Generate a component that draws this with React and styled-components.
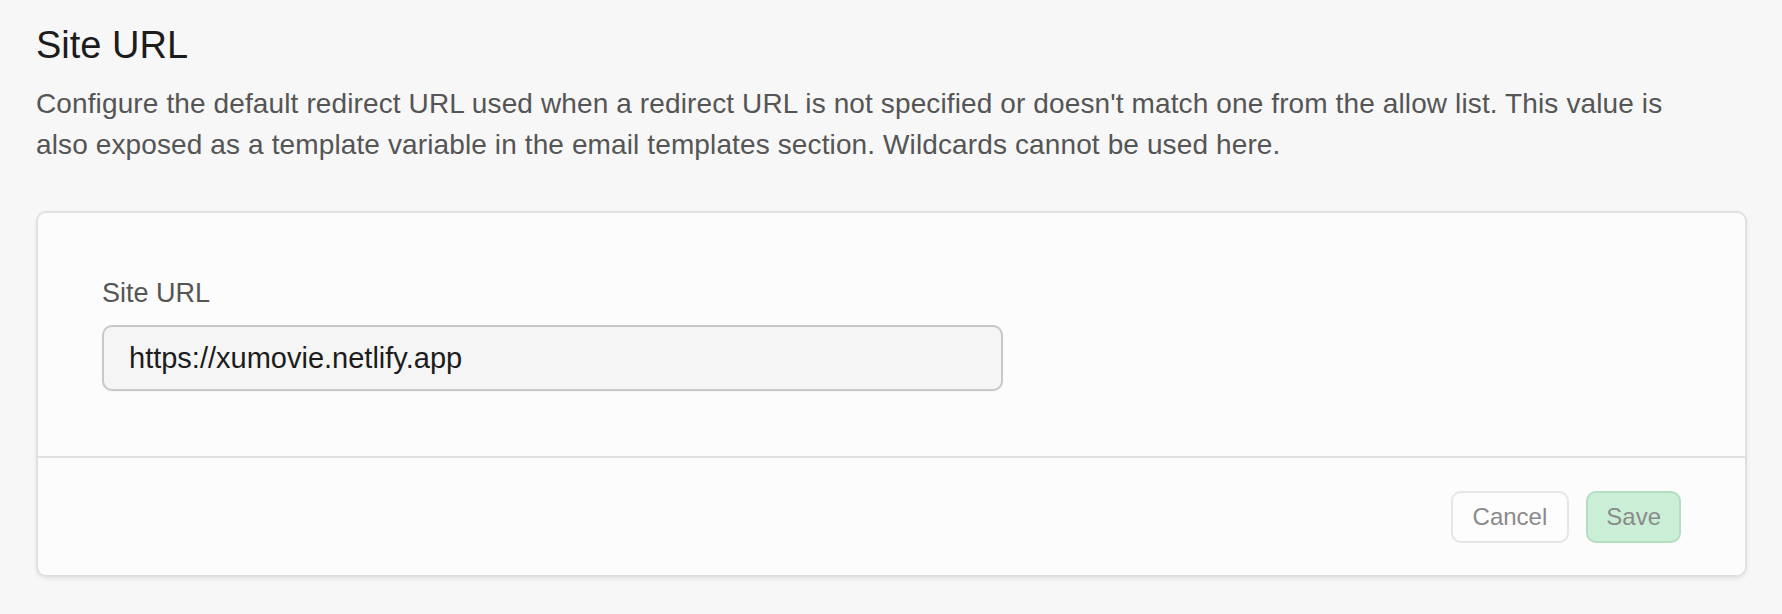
import React from "react";
import styled, { createGlobalStyle } from "styled-components";

const GlobalStyle = createGlobalStyle`
  html, body {
    margin: 0;
    padding: 0;
    background: #f7f7f7;
  }
  body {
    font-family: "Liberation Sans", Arial, sans-serif;
    -webkit-font-smoothing: antialiased;
  }
  * {
    box-sizing: border-box;
  }
`;

const App = () => {
  return (
    <>
      <GlobalStyle />
      <StyledPage>
        <StyledHeader>
          <h2>Site URL</h2>
          <p>
            Configure the default redirect URL used when a redirect URL is not
            specified or doesn't match one from the allow list. This value is
            also exposed as a template variable in the email templates section.
            Wildcards cannot be used here.
          </p>
        </StyledHeader>

        <StyledCard>
          <StyledCardBody>
            <StyledField>
              <label htmlFor="site-url">Site URL</label>
              <StyledInput
                id="site-url"
                type="text"
                defaultValue="https://xumovie.netlify.app"
              />
            </StyledField>
          </StyledCardBody>

          <StyledCardFooter>
            <StyledButton>Cancel</StyledButton>
            <StyledButton primary>Save</StyledButton>
          </StyledCardFooter>
        </StyledCard>
      </StyledPage>
    </>
  );
};

export default App;

const StyledPage = styled.main`
  padding: 22px 35px 38px 36px;
  display: flex;
  flex-direction: column;
  gap: 46px;
`;

const StyledHeader = styled.header`
  display: flex;
  flex-direction: column;
  gap: 15px;

  h2 {
    margin: 0;
    font-size: 38px;
    line-height: 46px;
    font-weight: 400;
    color: #1c1c1c;
  }

  p {
    margin: 0;
    max-width: 1660px;
    font-size: 28px;
    line-height: 41px;
    letter-spacing: 0.12px;
    color: #555555;
  }
`;

const StyledCard = styled.section`
  background: #fcfcfc;
  border: 2px solid #e0e0e0;
  border-radius: 10px;
  box-shadow: 0 2px 4px rgba(0, 0, 0, 0.07);
  overflow: hidden;
`;

const StyledCardBody = styled.div`
  padding: 62px 64px 65px;
`;

const StyledField = styled.div`
  display: flex;
  flex-direction: column;
  gap: 14px;
  width: 901px;

  label {
    font-size: 27px;
    line-height: 36px;
    color: #555555;
  }
`;

const StyledInput = styled.input`
  width: 100%;
  height: 66px;
  padding: 0 25px;
  border: 2px solid #c8c8c8;
  border-radius: 10px;
  background: #f5f5f5;
  font-family: "Liberation Sans", Arial, sans-serif;
  font-size: 29px;
  color: #1c1c1c;
  box-shadow: 0 1px 2px rgba(0, 0, 0, 0.04);
  outline: none;
`;

const StyledCardFooter = styled.div`
  border-top: 2px solid #e0e0e0;
  padding: 33px 64px 32px;
  display: flex;
  justify-content: flex-end;
  gap: 17px;
`;

const StyledButton = styled.button`
  height: 52px;
  padding: 0 ${(props) => (props.primary ? "18px" : "20px")};
  border-radius: 10px;
  border: 2px solid ${(props) => (props.primary ? "#b3dfc1" : "#e6e6e6")};
  background: ${(props) => (props.primary ? "#cbeed7" : "#fdfdfd")};
  color: #8a8a8a;
  font-family: "Liberation Sans", Arial, sans-serif;
  font-size: 24px;
  cursor: pointer;
`;
